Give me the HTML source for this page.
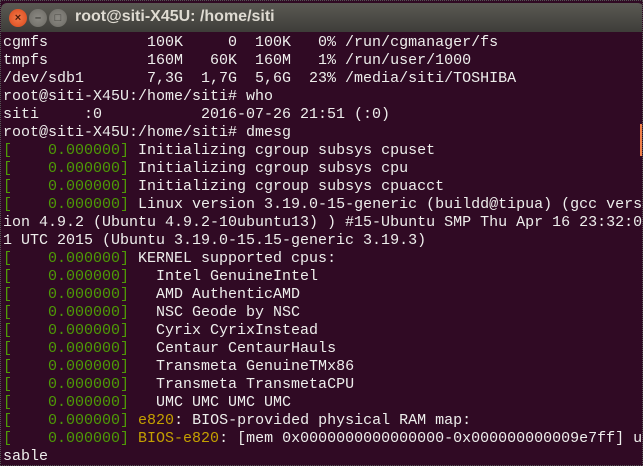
<!DOCTYPE html>
<html><head><meta charset="utf-8"><style>
html,body{margin:0;padding:0;background:#fff;}
#win{position:absolute;left:0;top:0;width:643px;height:466px;overflow:hidden;background:#300a24;border:1px dotted #555;box-sizing:border-box;}
#title{position:absolute;left:0;top:2px;width:643px;height:29px;background:linear-gradient(#5a5953,#3e3d39);border-radius:6px 6px 0 0;}
#title .t{position:absolute;left:74px;top:5px;font:bold 16px "Liberation Sans",sans-serif;color:#dfdbd2;}
.b{position:absolute;top:6px;width:18px;height:18px;border-radius:50%;font:bold 11px "Liberation Sans",sans-serif;text-align:center;line-height:18px;}
#term{position:absolute;left:2px;top:33px;font:15px/18px "Liberation Mono",monospace;color:#eeeeec;white-space:pre;}
.g{color:#4e9a06}.y{color:#c4a000}
#sb{position:absolute;left:639px;top:123px;width:4px;height:32px;background:#f0804a;}
</style></head><body><div id="win">
<div id="title">
<div class="b" style="left:8px;background:radial-gradient(#f47a4a,#d9461a);color:#4a1a0a">×</div>
<div class="b" style="left:28px;background:radial-gradient(#8c8a84,#6c6a64);color:#3c3b37">–</div>
<div class="b" style="left:48px;background:radial-gradient(#8c8a84,#6c6a64);color:#3c3b37">□</div>
<div class="t">root@siti-X45U: /home/siti</div>
</div>
<div id="term">cgmfs           100K     0  100K   0% /run/cgmanager/fs
tmpfs           160M   60K  160M   1% /run/user/1000
/dev/sdb1       7,3G  1,7G  5,6G  23% /media/siti/TOSHIBA
root@siti-X45U:/home/siti# who
siti     :0           2016-07-26 21:51 (:0)
root@siti-X45U:/home/siti# dmesg
<span class="g">[    0.000000]</span> Initializing cgroup subsys cpuset
<span class="g">[    0.000000]</span> Initializing cgroup subsys cpu
<span class="g">[    0.000000]</span> Initializing cgroup subsys cpuacct
<span class="g">[    0.000000]</span> Linux version 3.19.0-15-generic (buildd@tipua) (gcc vers
ion 4.9.2 (Ubuntu 4.9.2-10ubuntu13) ) #15-Ubuntu SMP Thu Apr 16 23:32:0
1 UTC 2015 (Ubuntu 3.19.0-15.15-generic 3.19.3)
<span class="g">[    0.000000]</span> KERNEL supported cpus:
<span class="g">[    0.000000]</span>   Intel GenuineIntel
<span class="g">[    0.000000]</span>   AMD AuthenticAMD
<span class="g">[    0.000000]</span>   NSC Geode by NSC
<span class="g">[    0.000000]</span>   Cyrix CyrixInstead
<span class="g">[    0.000000]</span>   Centaur CentaurHauls
<span class="g">[    0.000000]</span>   Transmeta GenuineTMx86
<span class="g">[    0.000000]</span>   Transmeta TransmetaCPU
<span class="g">[    0.000000]</span>   UMC UMC UMC UMC
<span class="g">[    0.000000]</span> <span class="y">e820</span>: BIOS-provided physical RAM map:
<span class="g">[    0.000000]</span> <span class="y">BIOS-e820</span>: [mem 0x0000000000000000-0x000000000009e7ff] u
sable</div>
<div id="sb"></div>
</div></body></html>
